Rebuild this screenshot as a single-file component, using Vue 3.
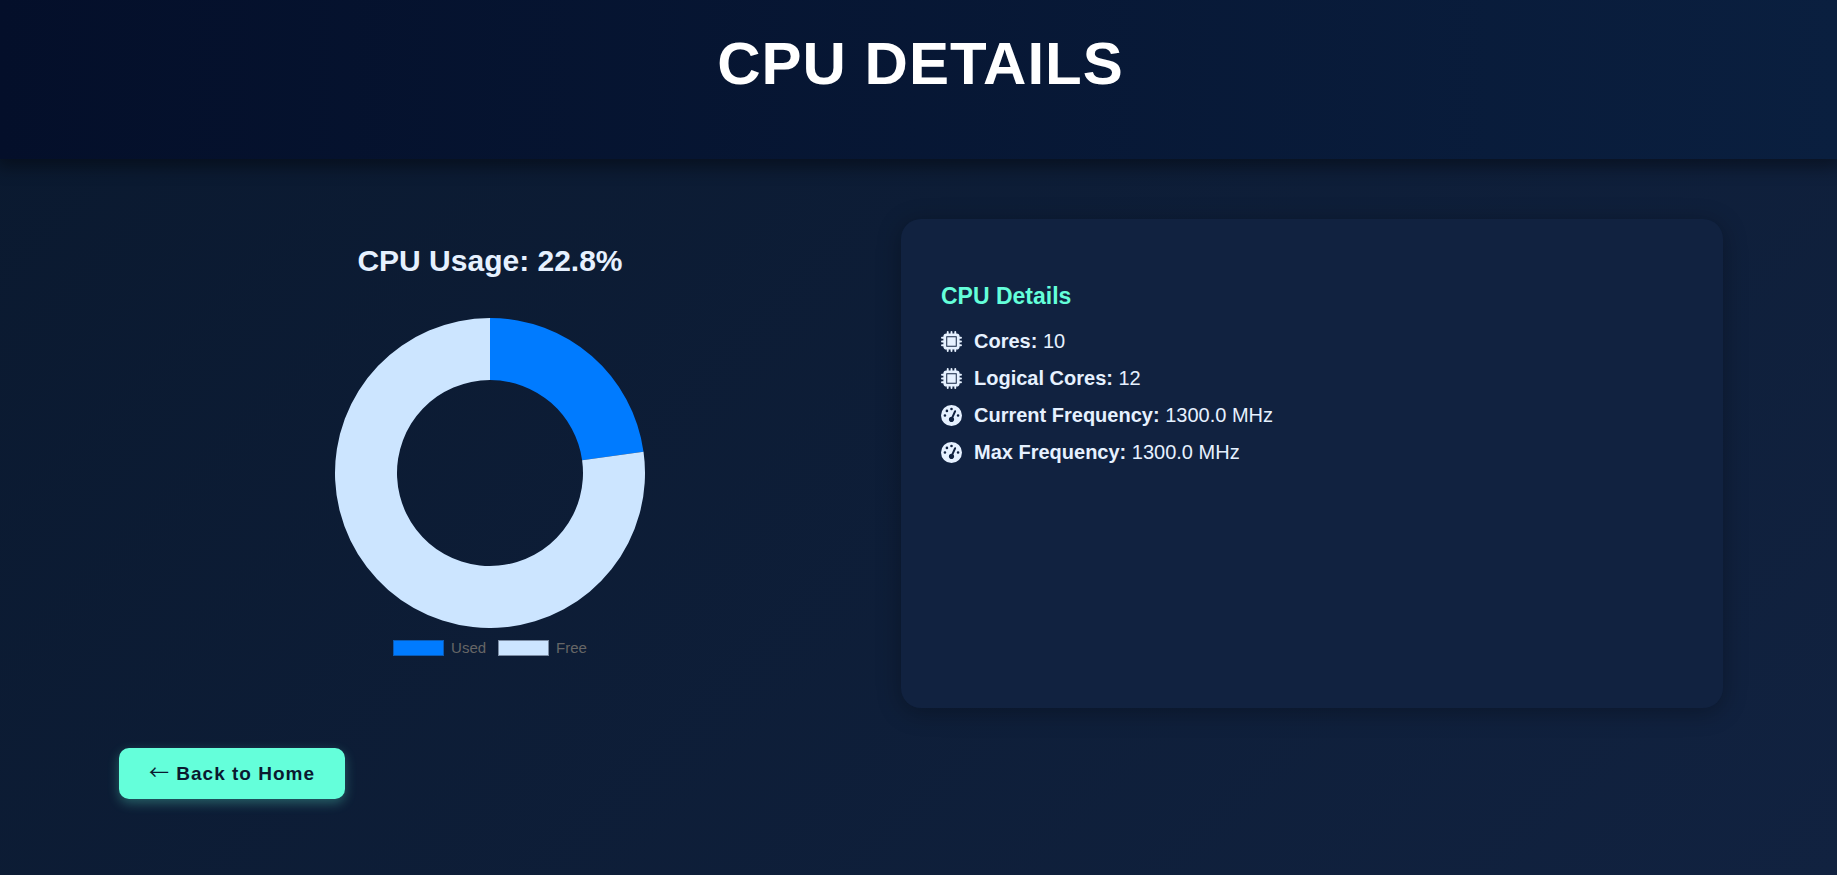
<script setup>
const used = 22.8
const cx = 155
const outer = 155
const inner = 93

function point(radius, percent) {
  const a = (percent / 100) * 2 * Math.PI
  return `${(cx + radius * Math.sin(a)).toFixed(3)} ${(cx - radius * Math.cos(a)).toFixed(3)}`
}

function slice(from, to) {
  const large = to - from > 50 ? 1 : 0
  return `M${point(outer, from)} A${outer} ${outer} 0 ${large} 1 ${point(outer, to)} L${point(inner, to)} A${inner} ${inner} 0 ${large} 0 ${point(inner, from)} Z`
}

const slices = [
  { label: 'Used', kind: 'used', d: slice(0, used) },
  { label: 'Free', kind: 'free', d: slice(used, 100) },
]

const details = [
  { icon: 'chip', label: 'Cores:', value: '10' },
  { icon: 'chip', label: 'Logical Cores:', value: '12' },
  { icon: 'gauge', label: 'Current Frequency:', value: '1300.0 MHz' },
  { icon: 'gauge', label: 'Max Frequency:', value: '1300.0 MHz' },
]
</script>

<template>
  <div class="page">
    <header class="header">
      <h1>CPU DETAILS</h1>
    </header>
    <main class="content">
      <div class="columns">
        <section class="usage">
          <h2>CPU Usage: {{ used }}%</h2>
          <svg class="donut" viewBox="0 0 310 310" role="img" aria-label="CPU usage chart">
            <path v-for="s in slices" :key="s.kind" :class="s.kind" :d="s.d" />
          </svg>
          <ul class="legend">
            <li v-for="s in slices" :key="s.kind">
              <span class="swatch" :class="s.kind"></span>{{ s.label }}
            </li>
          </ul>
        </section>
        <section class="card">
          <h3>CPU Details</h3>
          <ul class="details">
            <li v-for="item in details" :key="item.label">
              <svg class="icon" viewBox="0 0 512 512" aria-hidden="true">
                <g v-if="item.icon === 'chip'">
                  <path class="pins" d="M164 24V64M164 448V488M256 24V64M256 448V488M348 24V64M348 448V488M24 164H64M448 164H488M24 256H64M448 256H488M24 348H64M448 348H488" />
                  <path fill-rule="evenodd" d="M134 58h244a76 76 0 0 1 76 76v244a76 76 0 0 1-76 76H134a76 76 0 0 1-76-76V134a76 76 0 0 1 76-76zM128 128V384H384V128zM152 152H360V360H152z" />
                </g>
                <path v-else fill-rule="evenodd" d="M0 256a256 256 0 1 1 512 0A256 256 0 1 1 0 256zM288 96a32 32 0 1 0-64 0 32 32 0 1 0 64 0zM256 416c35.300 0 64-28.700 64-64 0-17.400-6.900-33.100-18.100-44.600L366 161.700c5.300-12.100-.2-26.300-12.300-31.600s-26.300 .2-31.600 12.300L257.900 288H256c-35.300 0-64 28.700-64 64s28.700 64 64 64zM176 144a32 32 0 1 0-64 0 32 32 0 1 0 64 0zM96 288a32 32 0 1 0 0-64 32 32 0 1 0 0 64zm352-32a32 32 0 1 0-64 0 32 32 0 1 0 64 0z" />
              </svg>
              <span><strong>{{ item.label }}</strong> {{ item.value }}</span>
            </li>
          </ul>
        </section>
      </div>
      <a class="back" href="#"><span class="arrow">←</span> Back to Home</a>
    </main>
  </div>
</template>

<style>
body {
  margin: 0;
  background: #0a192f;
}
</style>

<style scoped>
.page {
  min-height: 100vh;
  box-sizing: border-box;
  background: linear-gradient(135deg, #0a192f, #112240);
  color: #e6f1ff;
  font-family: "Liberation Sans", Arial, sans-serif;
}

.header {
  height: 159px;
  box-sizing: border-box;
  padding: 29px 0 0 4px;
  background: linear-gradient(90deg, #040f2a, #0a1f3f);
  box-shadow: 0 4px 16px 4px rgba(0, 0, 0, 0.4);
  text-align: center;
}

h1 {
  margin: 0;
  font-size: 60px;
  line-height: 70px;
  letter-spacing: 1px;
  color: #fff;
}

.content {
  padding: 60px 114px 76px 119px;
}

.columns {
  display: grid;
  grid-template-columns: 742fr 822fr;
  gap: 40px;
}

.usage {
  display: flex;
  flex-direction: column;
  align-items: center;
  padding-top: 24px;
}

h2 {
  margin: 0 0 40px;
  font-size: 30px;
  line-height: 35px;
}

.donut {
  width: 310px;
  height: 310px;
}

path.used {
  fill: #007bff;
}

path.free {
  fill: #cce5ff;
}

.legend {
  display: flex;
  gap: 12px;
  margin: 11px 0 0;
  padding: 0;
  list-style: none;
  font-size: 15px;
  line-height: 18px;
  color: #666;
}

.legend li {
  display: flex;
  align-items: center;
  gap: 7px;
}

.swatch {
  width: 51px;
  height: 16px;
  box-sizing: border-box;
  border: 1px solid;
}

.swatch.used {
  background: #007bff;
  border-color: #0a5ab4;
}

.swatch.free {
  background: #cce5ff;
  border-color: #7b8ca3;
}

.card {
  min-height: 489px;
  box-sizing: border-box;
  padding: 62px 40px;
  border-radius: 20px;
  background: #112240;
  box-shadow: 0 4px 25px rgba(0, 0, 0, 0.3);
}

h3 {
  margin: 0 0 12px;
  font-size: 23px;
  line-height: 30px;
  color: #64ffda;
}

.details {
  margin: 0;
  padding: 0;
  list-style: none;
  font-size: 20px;
  line-height: 37px;
}

.details li {
  display: flex;
  align-items: center;
  gap: 12px;
}

.icon {
  width: 21px;
  height: 21px;
  fill: currentColor;
}

.pins {
  fill: none;
  stroke: currentColor;
  stroke-width: 46px;
  stroke-linecap: round;
}

.back {
  display: inline-block;
  margin-top: 40px;
  padding: 12px 30px;
  border-radius: 10px;
  background: #64ffda;
  box-shadow: 0 4px 12px rgba(100, 255, 218, 0.3);
  color: #0a192f;
  font-size: 19px;
  font-weight: 700;
  line-height: 27px;
  letter-spacing: 1px;
  text-decoration: none;
}

.arrow {
  font-family: "Noto Sans CJK JP", sans-serif;
  font-size: 20px;
  font-weight: 400;
  line-height: 1;
}
</style>
